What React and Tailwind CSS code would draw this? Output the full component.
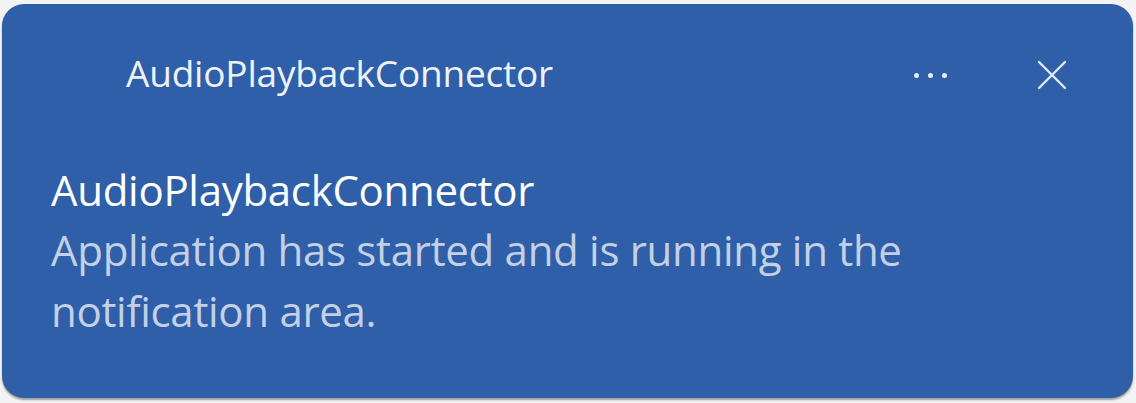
import React from "react";

const Toast = () => {
  return (
    <div className="w-[1136px] h-[403px] bg-[#f3f3f3] pt-[4px] pl-[2px] pr-[3px] pb-[5px]">
      <div className="h-full rounded-[22px] bg-[#2e5fa8] shadow-[0_2px_2px_rgba(0,0,0,0.35)] flex flex-col" style={{ fontFamily: "'Open Sans', 'Noto Sans', sans-serif" }}>
        <div className="flex items-center h-[136px] pl-[124px] pr-[66px]">
          <span className="text-[37px] leading-none text-[#eef2f8] tracking-[-0.2px]">AudioPlaybackConnector</span>
          <div className="ml-auto flex items-center gap-[90px] mt-[6px]">
            <div className="flex gap-[9px]">
              <span className="w-[5px] h-[5px] rounded-full bg-[#e8eef7]" />
              <span className="w-[5px] h-[5px] rounded-full bg-[#e8eef7]" />
              <span className="w-[5px] h-[5px] rounded-full bg-[#e8eef7]" />
            </div>
            <svg width="30" height="30" viewBox="0 0 30 30" fill="none" stroke="#e3e9f3" strokeWidth="2.4" strokeLinecap="round">
              <path d="M2 2 L28 28 M28 2 L2 28" />
            </svg>
          </div>
        </div>
        <div className="pl-[49px] pr-[40px] mt-[21px]">
          <div className="text-[42px] leading-[58px] text-white tracking-[-0.3px]">AudioPlaybackConnector</div>
          <div className="text-[42px] leading-[61px] text-[#c3d0e6] w-[920px] tracking-[-0.3px]">
            Application has started and is running in the notification area.
          </div>
        </div>
      </div>
    </div>
  );
};

export default function App() {
  return <Toast />;
}
